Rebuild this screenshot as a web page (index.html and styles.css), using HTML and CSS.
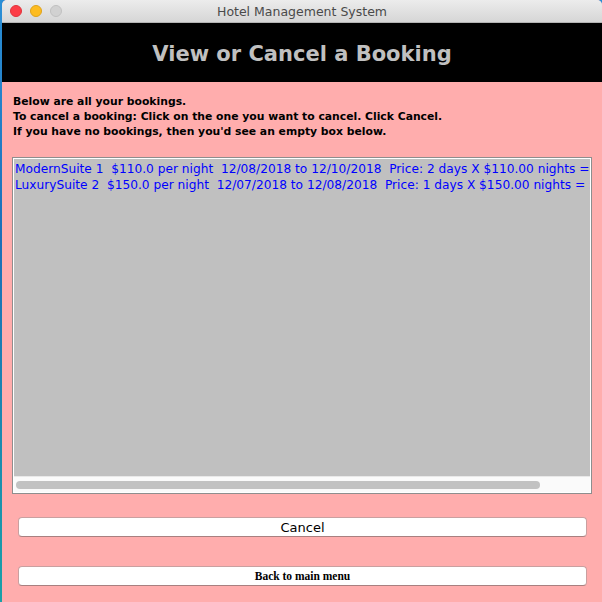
FILE: index.html
```html
<!DOCTYPE html>
<html>
<head>
<meta charset="utf-8">
<link rel="stylesheet" href="styles.css">
</head>
<body>
<div class="desktop">
  <div class="window">
    <div class="titlebar">
      <div class="lights">
        <span class="light red"></span>
        <span class="light yellow"></span>
        <span class="light gray"></span>
      </div>
      <div class="title">Hotel Management System</div>
    </div>
    <div class="header">View or Cancel a Booking</div>
    <div class="content">
      <div class="intro">
        <div>Below are all your bookings.</div>
        <div>To cancel a booking: Click on the one you want to cancel. Click Cancel.</div>
        <div>If you have no bookings, then you'd see an empty box below.</div>
      </div>
      <div class="listbox">
        <div class="items">
          <div class="item">ModernSuite 1&nbsp; $110.0 per night&nbsp; 12/08/2018 to 12/10/2018&nbsp; Price: 2 days X $110.00 nights = $220.00</div>
          <div class="item">LuxurySuite 2&nbsp; $150.0 per night&nbsp; 12/07/2018 to 12/08/2018&nbsp; Price: 1 days X $150.00 nights = $150.00</div>
        </div>
        <div class="hscroll"><div class="thumb"></div></div>
      </div>
      <div class="buttons">
        <button class="btn btn-cancel">Cancel</button>
        <button class="btn btn-back">Back to main menu</button>
      </div>
    </div>
  </div>
</div>
</body>
</html>
```

FILE: styles.css
```css
html, body {
  margin: 0;
  padding: 0;
  width: 602px;
  height: 602px;
  overflow: hidden;
}
.desktop {
  width: 602px;
  height: 602px;
  background: linear-gradient(180deg, #2a8fd6 0%, #1c6fb8 40%, #1aa0a8 100%);
  display: flex;
  padding-left: 2px;
  box-sizing: border-box;
}
.window {
  flex: 1;
  display: flex;
  flex-direction: column;
  background: #ffadad;
  border-top-left-radius: 5px;
  border-top-right-radius: 5px;
  overflow: hidden;
}
.titlebar {
  height: 23px;
  flex: none;
  background: linear-gradient(180deg, #ececec 0%, #d6d6d6 100%);
  border-bottom: 1px solid #b4b4b4;
  box-sizing: border-box;
  position: relative;
  display: flex;
  align-items: center;
  justify-content: center;
}
.lights {
  position: absolute;
  left: 8px;
  top: 5px;
  display: flex;
  gap: 8px;
}
.light {
  width: 12px;
  height: 12px;
  border-radius: 50%;
  box-sizing: border-box;
}
.red { background: #fc3d47; border: 1px solid #e0323b; }
.yellow { background: #fdbc20; border: 1px solid #dea21a; }
.gray { background: #d1d1d1; border: 1px solid #c0c0c0; }
.title {
  font-family: "DejaVu Sans", "Liberation Sans", sans-serif;
  font-size: 12.5px;
  color: #4a4a4a;
  margin-top: 1px;
}
.header {
  height: 59px;
  flex: none;
  background: #000;
  color: #c0c0c0;
  font-family: "DejaVu Sans", sans-serif;
  font-weight: bold;
  font-size: 21px;
  display: flex;
  align-items: center;
  justify-content: center;
  padding-top: 3px;
  box-sizing: border-box;
}
.content {
  flex: 1;
  display: flex;
  flex-direction: column;
  padding: 12px 10px 0 10px;
}
.intro {
  font-family: "DejaVu Sans", sans-serif;
  font-weight: bold;
  font-size: 10.8px;
  line-height: 15px;
  color: #000;
  padding-left: 1px;
}
.listbox {
  margin-top: 18px;
  height: 337px;
  background: #fff;
  border: 1px solid #8e8e8e;
  box-sizing: border-box;
  display: flex;
  flex-direction: column;
  padding: 1px;
}
.items {
  flex: 1;
  background: #c0c0c0;
  overflow: hidden;
  padding: 2px 0 0 1px;
}
.item {
  font-family: "DejaVu Sans", sans-serif;
  font-size: 12.2px;
  line-height: 16px;
  color: #0000ff;
  white-space: nowrap;
}
.hscroll {
  height: 15px;
  flex: none;
  background: #fafafa;
  border-top: 1px solid #e8e8e8;
  display: flex;
  align-items: center;
  padding-left: 2px;
}
.thumb {
  width: 524px;
  height: 8px;
  border-radius: 4px;
  background: #c2c2c2;
}
.buttons {
  display: flex;
  flex-direction: column;
  gap: 29px;
  margin-top: 23px;
  padding: 0 5px 0 6px;
}
.btn {
  height: 20px;
  background: #fff;
  border: 1px solid #c9a0a0;
  border-bottom-color: #a88080;
  border-radius: 4px;
  margin: 0;
  padding: 0;
  color: #000;
}
.btn-cancel {
  font-family: "DejaVu Sans", sans-serif;
  font-size: 13px;
}
.btn-back {
  font-family: "Liberation Serif", serif;
  font-weight: bold;
  font-size: 11.5px;
}
```
